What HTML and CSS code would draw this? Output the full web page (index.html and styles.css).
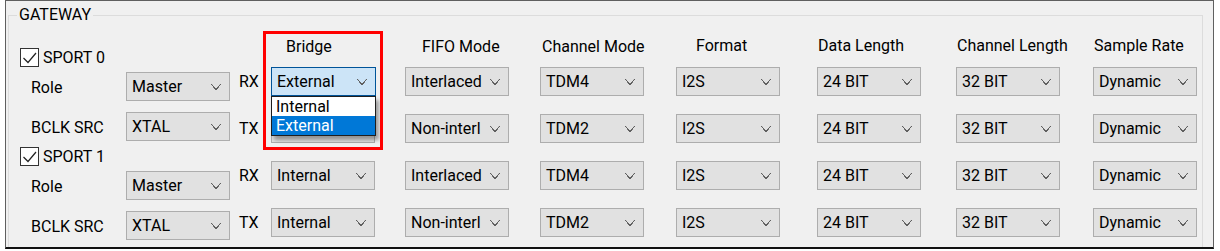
FILE: index.html
```html
<!DOCTYPE html>
<html lang="en">
<head>
    <meta charset="UTF-8">
    <title>Gateway</title>
    <link rel="stylesheet" href="styles.css">
</head>
<body>
    <div class="window">
        <fieldset class="group">
            <legend>GATEWAY</legend>
            <div class="layout">
                <!-- Port settings on the left -->
                <div class="ports">
                    <div class="port">
                        <label class="check">
                            <span class="box"><svg width="17" height="17" viewBox="0 0 17 17"><polyline points="2.5,9 7,13.5 15,4" /></svg></span>
                            SPORT 0
                        </label>
                        <div class="field role"><span class="label">Role</span><div class="combo">Master<i class="arrow"></i></div></div>
                        <div class="field bclk"><span class="label">BCLK SRC</span><div class="combo">XTAL<i class="arrow"></i></div></div>
                    </div>
                    <div class="port">
                        <label class="check">
                            <span class="box"><svg width="17" height="17" viewBox="0 0 17 17"><polyline points="2.5,9 7,13.5 15,4" /></svg></span>
                            SPORT 1
                        </label>
                        <div class="field role"><span class="label">Role</span><div class="combo">Master<i class="arrow"></i></div></div>
                        <div class="field bclk"><span class="label">BCLK SRC</span><div class="combo">XTAL<i class="arrow"></i></div></div>
                    </div>
                </div>

                <!-- Channel settings table -->
                <div class="table">
                    <div class="row head">
                        <span></span>
                        <span class="h-bridge">Bridge</span>
                        <span class="h-fifo">FIFO Mode</span>
                        <span class="h-chmode">Channel Mode</span>
                        <span class="h-format">Format</span>
                        <span class="h-plain">Data Length</span>
                        <span class="h-plain">Channel Length</span>
                        <span class="h-plain">Sample Rate</span>
                    </div>
                    <div class="row">
                        <span class="dir">RX</span>
                        <div class="combo open">External<i class="arrow"></i>
                            <div class="list">
                                <div class="item">Internal</div>
                                <div class="item selected">External</div>
                            </div>
                        </div>
                        <div class="combo">Interlaced<i class="arrow"></i></div>
                        <div class="combo">TDM4<i class="arrow"></i></div>
                        <div class="combo">I2S<i class="arrow"></i></div>
                        <div class="combo">24 BIT<i class="arrow"></i></div>
                        <div class="combo">32 BIT<i class="arrow"></i></div>
                        <div class="combo">Dynamic<i class="arrow"></i></div>
                    </div>
                    <div class="row">
                        <span class="dir">TX</span>
                        <!-- hidden under the open list -->
                        <div class="combo"><i class="arrow"></i></div>
                        <div class="combo">Non-interl<i class="arrow"></i></div>
                        <div class="combo">TDM2<i class="arrow"></i></div>
                        <div class="combo">I2S<i class="arrow"></i></div>
                        <div class="combo">24 BIT<i class="arrow"></i></div>
                        <div class="combo">32 BIT<i class="arrow"></i></div>
                        <div class="combo">Dynamic<i class="arrow"></i></div>
                    </div>
                    <div class="row">
                        <span class="dir">RX</span>
                        <div class="combo">Internal<i class="arrow"></i></div>
                        <div class="combo">Interlaced<i class="arrow"></i></div>
                        <div class="combo">TDM4<i class="arrow"></i></div>
                        <div class="combo">I2S<i class="arrow"></i></div>
                        <div class="combo">24 BIT<i class="arrow"></i></div>
                        <div class="combo">32 BIT<i class="arrow"></i></div>
                        <div class="combo">Dynamic<i class="arrow"></i></div>
                    </div>
                    <div class="row">
                        <span class="dir">TX</span>
                        <div class="combo">Internal<i class="arrow"></i></div>
                        <div class="combo">Non-interl<i class="arrow"></i></div>
                        <div class="combo">TDM2<i class="arrow"></i></div>
                        <div class="combo">I2S<i class="arrow"></i></div>
                        <div class="combo">24 BIT<i class="arrow"></i></div>
                        <div class="combo">32 BIT<i class="arrow"></i></div>
                        <div class="combo">Dynamic<i class="arrow"></i></div>
                    </div>
                </div>
            </div>
        </fieldset>

        <!-- Annotation around the Bridge column -->
        <div class="highlight"></div>
    </div>
</body>
</html>
```

FILE: styles.css
```css
body {
    margin: 0;
    background-color: #ffffff;
    font-family: Roboto, "Noto Sans", sans-serif;
    font-size: 16px;
    line-height: 20px;
    color: #000000;
}

/* Window panel */
.window {
    position: relative;
    box-sizing: border-box;
    width: 1209px;
    height: 249px;
    margin-left: 5px;
    background-color: #f0f0f0;
    border: 1px solid #5f5f5f;
    border-bottom: 2px solid #111111;
    overflow: hidden;
}

/* Group box */
.group {
    box-sizing: border-box;
    width: 1195px;
    height: 320px;
    margin: 4px 0 0 2px;
    padding: 0 0 0 8px;
    border: 1px solid #dcdcdc;
    min-width: 0;
}

.group legend {
    padding: 0 2px;
    line-height: 20px;
}

.layout {
    display: flex;
    align-items: flex-start;
}

/* Left side: ports */
.ports {
    width: 219px;
    margin-left: 3px;
    padding-top: 23px;
}

.port + .port {
    margin-top: 6px;
}

.check {
    display: flex;
    align-items: center;
    gap: 4px;
    height: 19px;
}

.box {
    box-sizing: border-box;
    width: 19px;
    height: 19px;
    border: 1px solid #333333;
    background-color: #ffffff;
}

.box svg {
    display: block;
}

.box polyline {
    fill: none;
    stroke: #222222;
    stroke-width: 1.2;
}

.field {
    display: flex;
    align-items: center;
}

.field.role {
    margin-top: 5px;
}

.field.bclk {
    margin-top: 11px;
}

.field .label {
    width: 95px;
    padding-left: 11px;
    padding-top: 2px;
}

/* Right side: channel table */
.table {
    padding-top: 9px;
}

.row {
    display: grid;
    grid-template-columns: 32px 134px 135px 136px 141px 139px 137px 104px;
    align-items: center;
}

.row + .row {
    margin-top: 18px;
}

.row.head {
    height: 20px;
    margin-bottom: 13px;
}

.row.head + .row {
    margin-top: 0;
}

.h-bridge { padding-left: 15px; padding-top: 3px; }
.h-fifo { padding-left: 17px; padding-top: 3px; }
.h-chmode { padding-left: 2px; padding-top: 3px; }
.h-format { padding-left: 20px; }
.h-plain { padding-left: 1px; padding-top: 1px; }

.dir {
    padding-top: 1px;
}

/* Combo boxes */
.combo {
    position: relative;
    box-sizing: border-box;
    width: 104px;
    height: 29px;
    padding-left: 5px;
    display: flex;
    align-items: center;
    background-color: #e1e1e1;
    border: 1px solid #adadad;
    white-space: nowrap;
}

.arrow {
    position: absolute;
    right: 8px;
    top: 11px;
    width: 10px;
    height: 6px;
    background:
        linear-gradient(to top right, transparent 45%, #606060 46%, #606060 60%, transparent 61%) left / 50% 100% no-repeat,
        linear-gradient(to top left, transparent 45%, #606060 46%, #606060 60%, transparent 61%) right / 50% 100% no-repeat;
}

.combo.open {
    width: 105px;
    background-color: #cce4f7;
    border-color: #005499;
}

.list {
    position: absolute;
    top: 28px;
    left: -1px;
    width: 105px;
    box-sizing: border-box;
    border: 1px solid #1e1e1e;
    background-color: #ffffff;
    box-shadow: 3px 4px 4px rgba(0, 0, 0, 0.35);
    z-index: 2;
}

.item {
    height: 19px;
    line-height: 19px;
    padding-left: 4px;
}

.item.selected {
    background-color: #0078d7;
    color: #ffffff;
}

/* Red annotation frame */
.highlight {
    position: absolute;
    left: 257px;
    top: 30px;
    width: 120px;
    height: 119px;
    box-sizing: border-box;
    border: 3px solid #ff0000;
    z-index: 3;
}
```
